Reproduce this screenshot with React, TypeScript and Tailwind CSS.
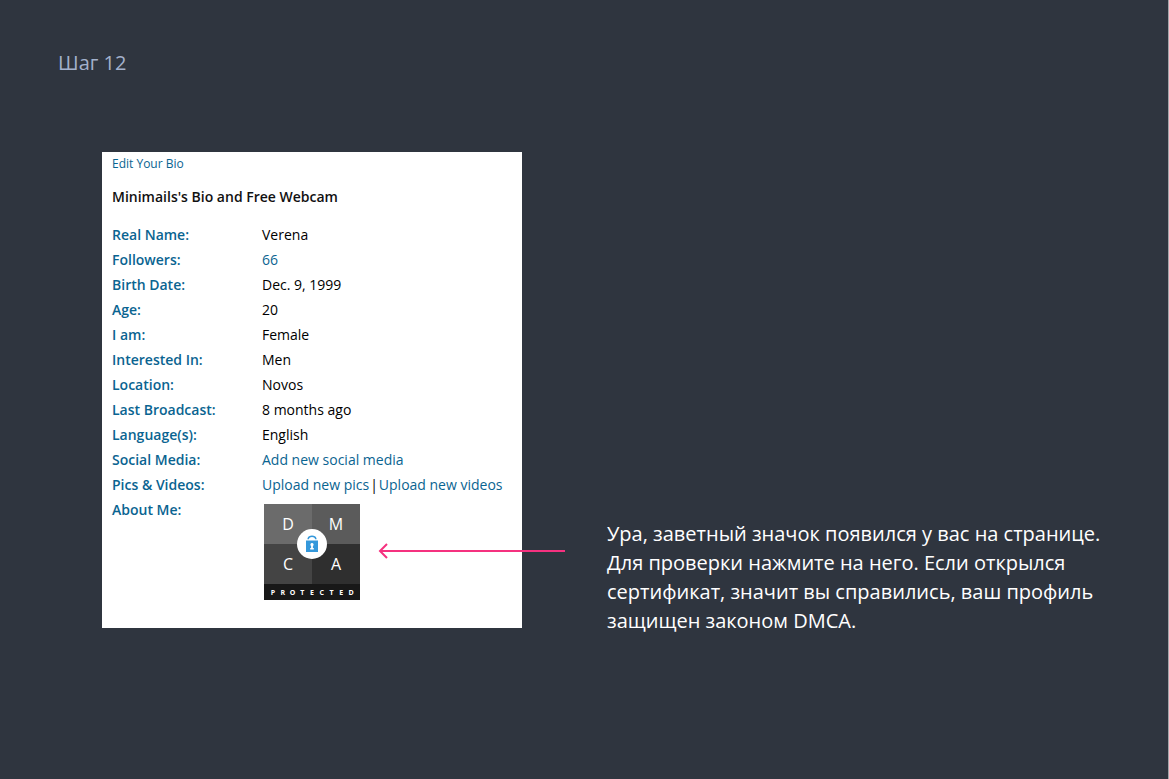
import React from "react";

type Row = { label: string; value: React.ReactNode };

const link = "text-[#0a6491] hover:underline";

const rows: Row[] = [
  { label: "Real Name:", value: "Verena" },
  { label: "Followers:", value: <a href="#followers" className={link}>66</a> },
  { label: "Birth Date:", value: "Dec. 9, 1999" },
  { label: "Age:", value: "20" },
  { label: "I am:", value: "Female" },
  { label: "Interested In:", value: "Men" },
  { label: "Location:", value: "Novos" },
  { label: "Last Broadcast:", value: "8 months ago" },
  { label: "Language(s):", value: "English" },
  { label: "Social Media:", value: <a href="#social" className={link}>Add new social media</a> },
  {
    label: "Pics & Videos:",
    value: (
      <span className="flex gap-px">
        <a href="#pics" className={link}>Upload new pics</a>
        <span>|</span>
        <a href="#videos" className={link}>Upload new videos</a>
      </span>
    ),
  },
];

function DmcaBadge() {
  return (
    <a href="#certificate" aria-label="DMCA Protected" className="mt-[7px] ml-[2px] block w-24">
      <svg viewBox="0 0 96 96" className="block size-24" fontFamily="'Open Sans', sans-serif" textAnchor="middle">
        <rect width="48" height="40" fill="#6b6b6b" />
        <rect x="48" width="48" height="40" fill="#5b5b5b" />
        <rect y="40" width="48" height="40" fill="#444444" />
        <rect x="48" y="40" width="48" height="40" fill="#2f2f2f" />
        <rect y="80" width="96" height="16" fill="#181818" />
        <g fill="#ffffff" fontSize="16">
          <text x="24" y="26">D</text>
          <text x="72" y="26">M</text>
          <text x="24" y="66">C</text>
          <text x="72" y="66">A</text>
        </g>
        <g fill="#ffffff" fontSize="7" fontWeight="700">
          {"PROTECTED".split("").map((c, i) => (
            <text key={i} x={9 + i * 9.75} y="91">{c}</text>
          ))}
        </g>
        <circle cx="48" cy="40" r="15" fill="#ffffff" />
        <path d="M44.2 35.2v-.6a3.9 3 0 0 1 7.6 0v.6" fill="none" stroke="#3498db" strokeWidth="1.5" />
        <rect x="42" y="36.5" width="12" height="11.5" fill="#3498db" />
        <path d="M48 39a1.7 1.7 0 0 0-.9 3.1V44h-.9v1.4h3.6V44h-.9v-1.9A1.7 1.7 0 0 0 48 39z" fill="#ffffff" />
      </svg>
    </a>
  );
}

export default function App() {
  return (
    <main className="min-h-screen border-r border-[#a3a6aa] bg-[#2f353f] pt-[48px] font-['Open_Sans',sans-serif]">
      <h1 className="ml-[58px] text-[20px] leading-[30px] text-[#a3b1cc]">Шаг 12</h1>
      <div className="mt-[74px] flex items-start pl-[102px]">
        <section className="w-[420px] shrink-0 bg-white px-[10px] pb-[28px] text-[14px] text-black">
          <a href="#edit" className="block text-[12px] leading-[24px] text-[#0a6491]">Edit Your Bio</a>
          <h2 className="mt-[9px] leading-[24px] font-semibold text-[#111111]">Minimails's Bio and Free Webcam</h2>
          <table className="mt-[13px] w-full text-left leading-[25px]">
            <tbody>
              {rows.map((r) => (
                <tr key={r.label}>
                  <th scope="row" className="w-[150px] p-0 font-semibold text-[#0a6491]">{r.label}</th>
                  <td className="p-0 whitespace-nowrap">{r.value}</td>
                </tr>
              ))}
              <tr>
                <th scope="row" className="p-0 align-top font-semibold text-[#0a6491]">About Me:</th>
                <td className="p-0"><DmcaBadge /></td>
              </tr>
            </tbody>
          </table>
        </section>
        <svg viewBox="0 0 187 16" className="z-10 mt-[391px] -ml-[144px] h-4 w-[187px] shrink-0" fill="none" stroke="#f5317f" strokeWidth="2" aria-hidden="true">
          <path d="M187 8H2M9 1L2 8l7 7" />
        </svg>
        <p className="mt-[367px] ml-[42px] text-[20px] leading-[29px] whitespace-nowrap text-white">
          Ура, заветный значок появился у вас на странице.
          <br />
          Для проверки нажмите на него. Если открылся
          <br />
          сертификат, значит вы справились, ваш профиль
          <br />
          защищен законом DMCA.
        </p>
      </div>
    </main>
  );
}
